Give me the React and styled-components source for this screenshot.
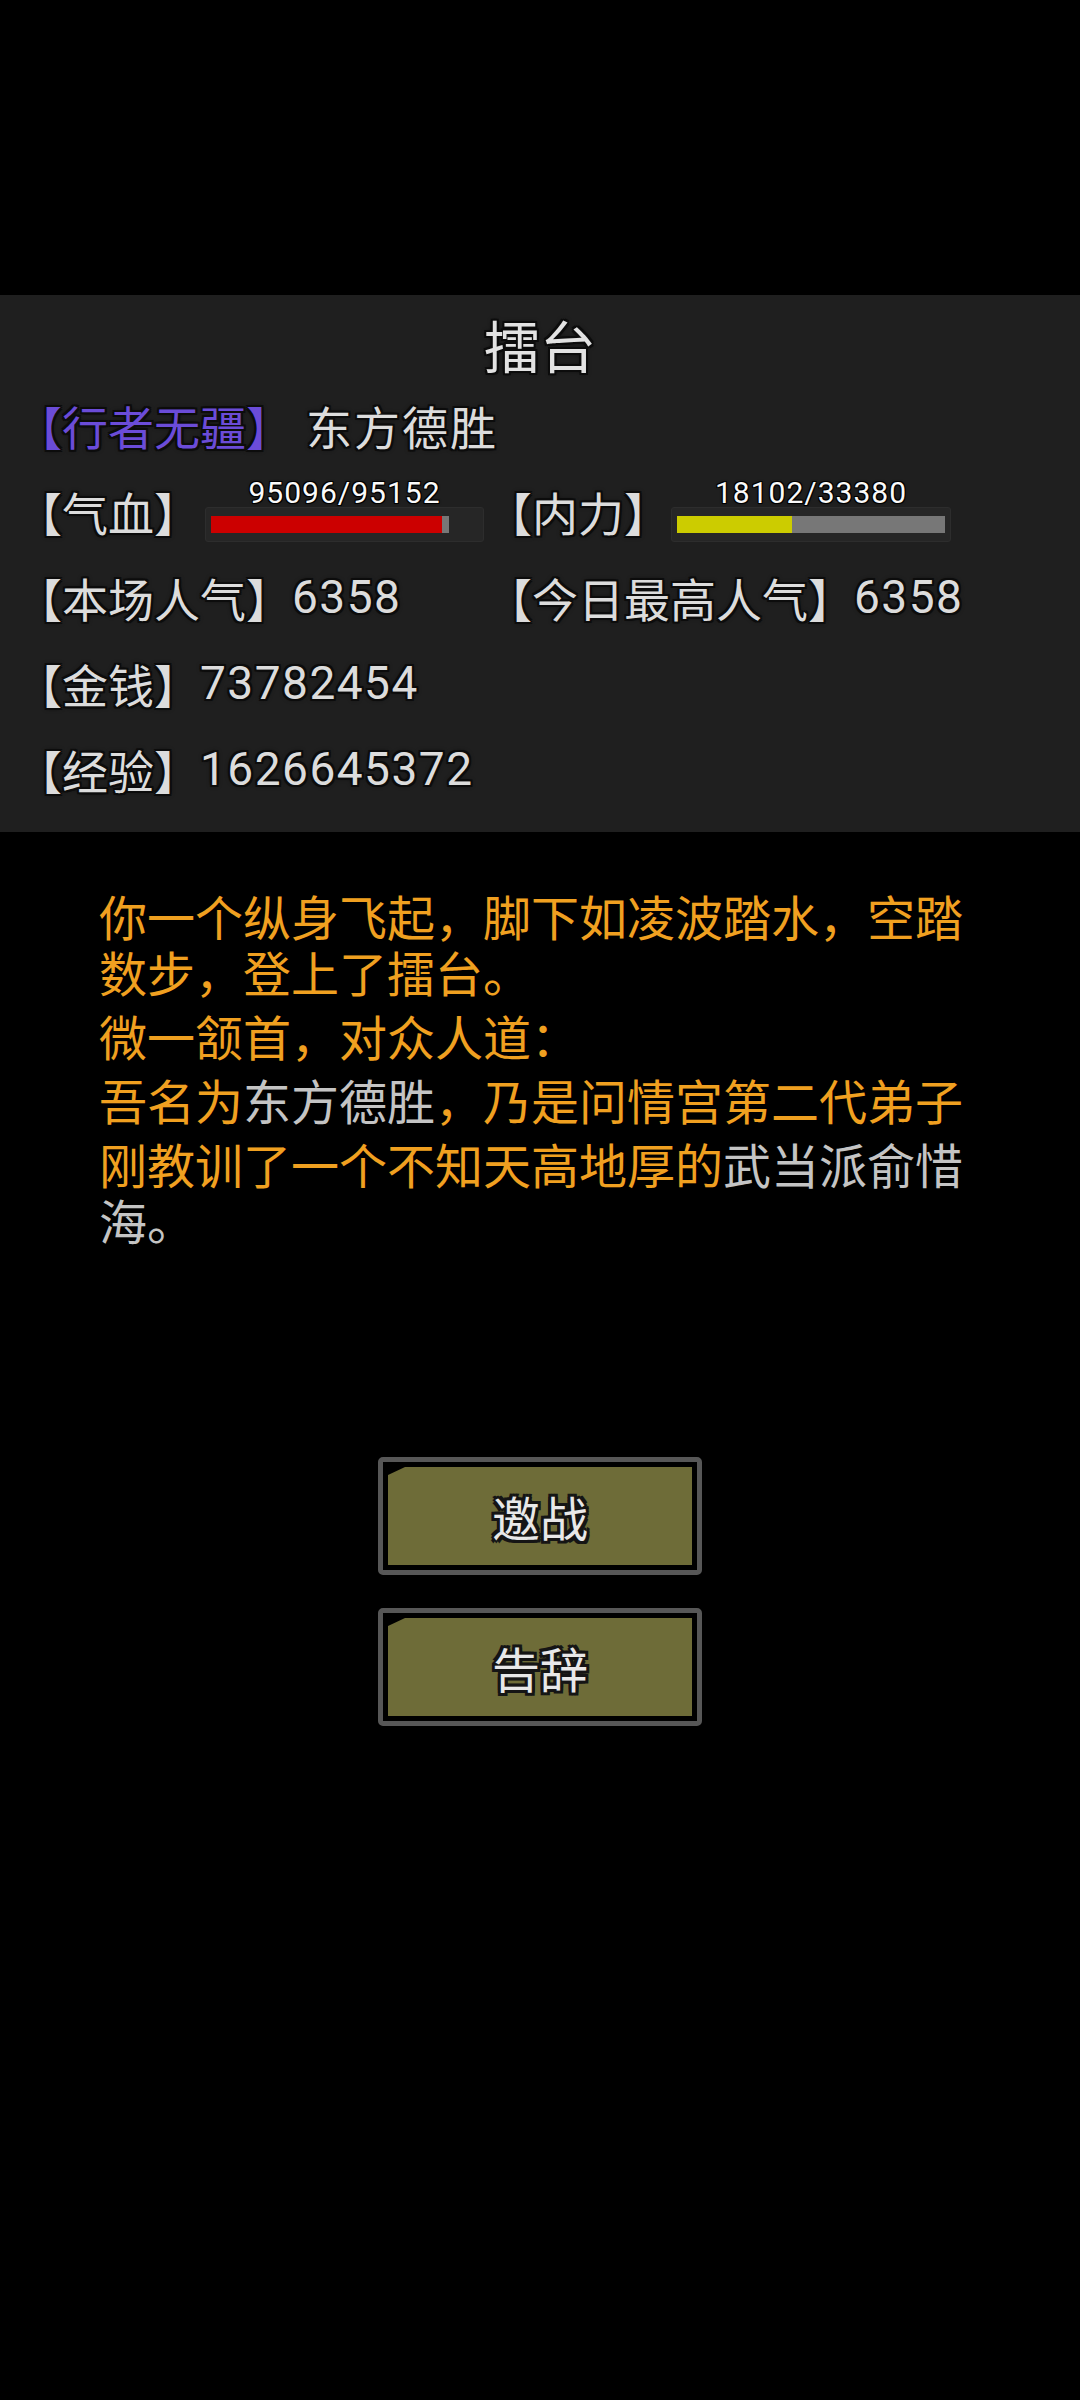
import React from "react";
import styled, { createGlobalStyle } from "styled-components";

const Global = createGlobalStyle`
  html, body { margin: 0; padding: 0; background: #000; }
  body { width: 1080px; min-height: 2400px; font-family: Roboto, "Noto Sans CJK SC", sans-serif; }
`;

const outline = `-2px -2px 0 #0c0c0c, 2px -2px 0 #0c0c0c, -2px 2px 0 #0c0c0c, 2px 2px 0 #0c0c0c, 0 -2px 0 #0c0c0c, 0 2px 0 #0c0c0c, -2px 0 0 #0c0c0c, 2px 0 0 #0c0c0c, 0 0 5px #000`;

const Page = styled.div`
  width: 1080px;
  min-height: 2400px;
  background: #000;
  padding-top: 295px;
  box-sizing: border-box;
`;

const Panel = styled.section`
  background: #1f1f1f;
  height: 537px;
  box-sizing: border-box;
  padding: 9px 0 0 16px;
`;

const Title = styled.h1`
  margin: 0;
  height: 79px;
  display: flex;
  align-items: center;
  justify-content: center;
  padding-right: 16px;
  font-family: "Noto Sans CJK SC", serif;
  font-weight: 400;
  font-size: 56px;
  color: #e2e2e2;
  text-shadow: ${outline};
`;

const Row = styled.div`
  height: ${(p) => p.$h || 86}px;
  display: grid;
  grid-template-columns: 470px 1fr;
  align-items: center;
  font-size: 46px;
  color: #dcdcdc;
  text-shadow: ${outline};
  white-space: nowrap;
`;

const Line = styled.div`
  display: flex;
  align-items: center;
`;

const Guild = styled.span`
  color: #6b4cd8;
`;

const Player = styled.span`
  margin-left: 14px;
  letter-spacing: 2px;
`;

const Num = styled.span`
  letter-spacing: 1.5px;
`;

const Label = styled.span`
  width: 184px;
  flex: none;
`;

const BarGroup = styled.div`
  display: flex;
  flex-direction: column;
  align-items: stretch;
  width: ${(p) => p.$w}px;
  margin-left: ${(p) => p.$ml}px;
`;

const BarValue = styled.div`
  font-size: 30px;
  line-height: 26px;
  height: 26px;
  text-align: center;
  color: #fafafa;
  letter-spacing: 1px;
  margin-bottom: 1px;
  text-shadow: -1px -1px 0 #000, 1px -1px 0 #000, -1px 1px 0 #000, 1px 1px 0 #000, 0 0 3px #000;
`;

const BarFrame = styled.div`
  height: 35px;
  box-sizing: border-box;
  background: #262626;
  border: 1px solid #2d2d2d;
  border-radius: 3px;
  padding: 8px 5px 0 5px;
`;

const Track = styled.div`
  height: 17px;
  display: flex;
`;

const Buffer = styled.div`
  height: 100%;
  background: #777;
  display: flex;
`;

const Fill = styled.div`
  height: 100%;
  background: ${(p) => p.$c};
`;

const Story = styled.div`
  width: 880px;
  margin: 55px 0 0 99px;
  font-family: "Noto Sans CJK SC", sans-serif;
  font-size: 48px;
  line-height: 56px;
  color: #f0a020;
`;

const Para = styled.p`
  margin: 0 0 8px 0;
`;

const Name = styled.span`
  color: #c4c4c4;
`;

const Actions = styled.div`
  margin-top: 210px;
  display: flex;
  flex-direction: column;
  align-items: center;
  gap: 33px;
`;

const Button = styled.button`
  width: 324px;
  height: 118px;
  box-sizing: border-box;
  border: 5px solid #575757;
  border-radius: 5px;
  background: #000;
  padding: 5px;
  display: flex;
  cursor: pointer;
`;

const ButtonFace = styled.span`
  flex: 1;
  background: #6e6c38;
  clip-path: polygon(17px 0, 100% 0, 100% 100%, 0 100%, 0 8px);
  display: flex;
  align-items: center;
  justify-content: center;
  font-family: "Noto Sans CJK SC", sans-serif;
  font-size: 48px;
  color: #e8e8e8;
  text-shadow: -3px -3px 0 #151515, 3px -3px 0 #151515, -3px 3px 0 #151515, 3px 3px 0 #151515, 0 -3px 0 #151515, 0 3px 0 #151515, -3px 0 0 #151515, 3px 0 0 #151515;
`;

function Bar({ value, max, fill, buffer, color, width, ml }) {
  return (
    <BarGroup $w={width} $ml={ml}>
      <BarValue>
        {value}/{max}
      </BarValue>
      <BarFrame>
        <Track>
          <Buffer style={{ width: `${buffer}%` }}>
            <Fill $c={color} style={{ width: `${(fill / buffer) * 100}%` }} />
          </Buffer>
        </Track>
      </BarFrame>
    </BarGroup>
  );
}

export default function App() {
  return (
    <Page>
      <Global />
      <Panel>
        <Title>擂台</Title>
        <Row $h={84}>
          <Line>
            <Guild>【行者无疆】</Guild>
            <Player>东方德胜</Player>
          </Line>
        </Row>
        <Row $h={87}>
          <Line>
            <Label>【气血】</Label>
            <Bar value="95096" max="95152" fill={86.7} buffer={89.1} color="#cc0000" width={279} ml={5} />
          </Line>
          <Line>
            <Label>【内力】</Label>
            <Bar value="18102" max="33380" fill={43} buffer={100} color="#cccc00" width={280} ml={1} />
          </Line>
        </Row>
        <Row>
          <Line>
            【本场人气】<Num>6358</Num>
          </Line>
          <Line>
            【今日最高人气】<Num>6358</Num>
          </Line>
        </Row>
        <Row>
          <Line>
            【金钱】<Num>73782454</Num>
          </Line>
        </Row>
        <Row>
          <Line>
            【经验】<Num>1626645372</Num>
          </Line>
        </Row>
      </Panel>
      <Story>
        <Para>你一个纵身飞起，脚下如凌波踏水，空踏数步，登上了擂台。</Para>
        <Para>微一颔首，对众人道：</Para>
        <Para>
          吾名为<Name>东方德胜</Name>，乃是问情宫第二代弟子
        </Para>
        <Para>
          刚教训了一个不知天高地厚的<Name>武当派俞惜海。</Name>
        </Para>
      </Story>
      <Actions>
        <Button>
          <ButtonFace>邀战</ButtonFace>
        </Button>
        <Button>
          <ButtonFace>告辞</ButtonFace>
        </Button>
      </Actions>
    </Page>
  );
}
